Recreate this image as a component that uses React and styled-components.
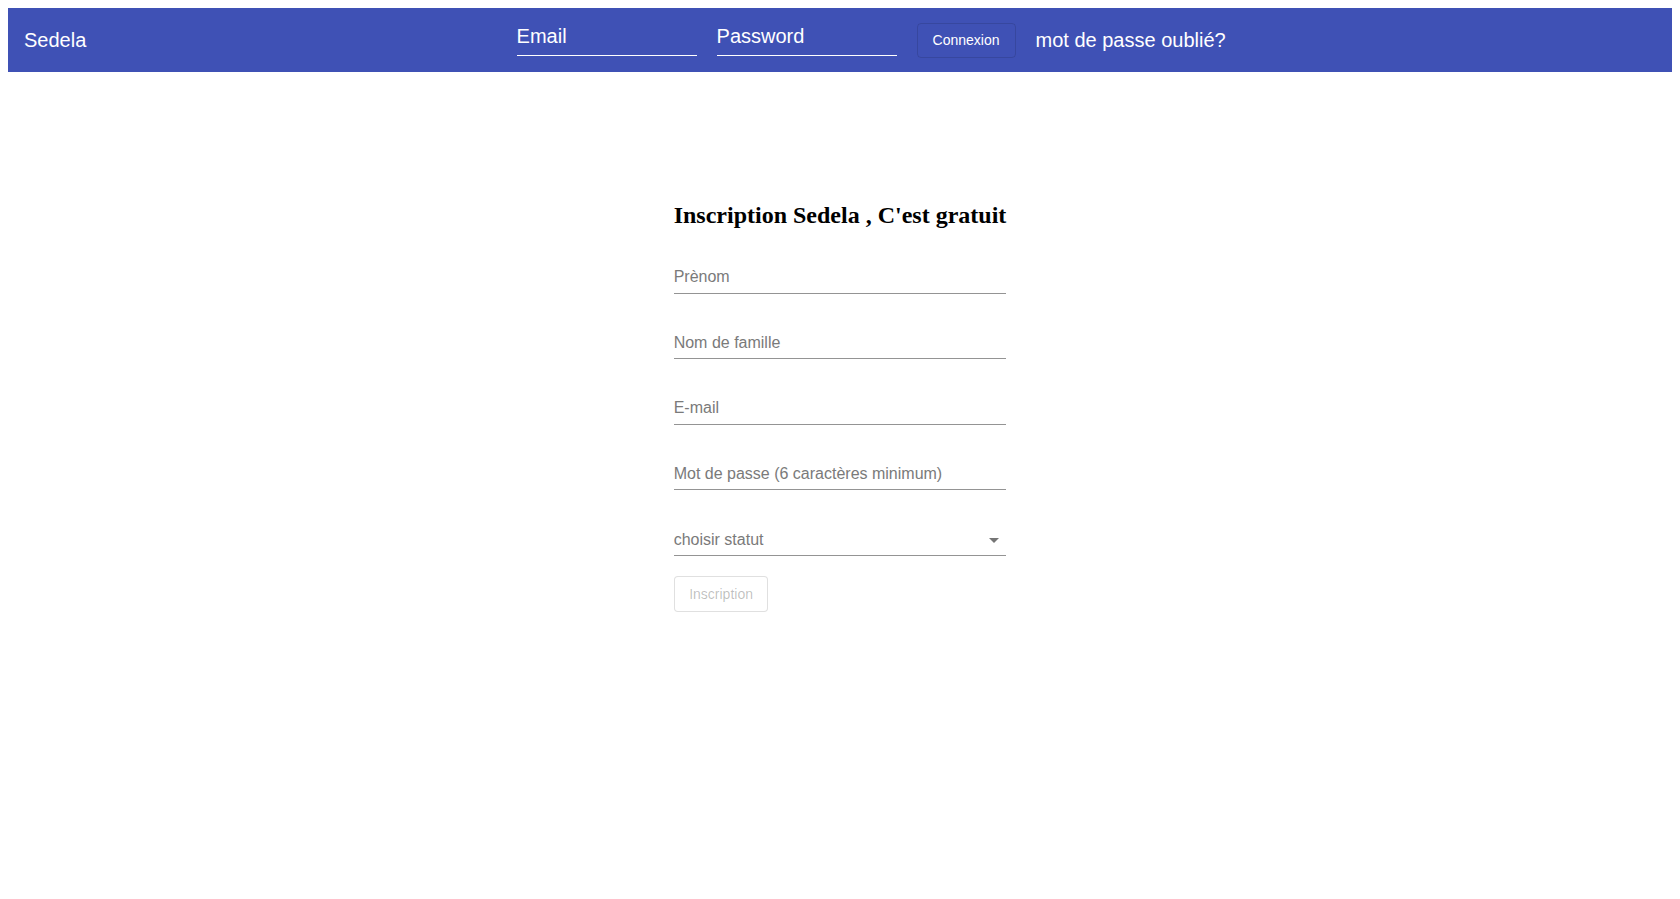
import React from "react";
import styled, { createGlobalStyle } from "styled-components";

const GlobalStyle = createGlobalStyle`
  body {
    margin: 8px;
    background: #ffffff;
    font-family: "Liberation Sans", Arial, sans-serif;
  }
`;

export default function App() {
  return (
    <>
      <GlobalStyle />
      <AppBar>
        <Brand>Sedela</Brand>
        <LoginForm>
          <HeaderField>Email</HeaderField>
          <HeaderField>Password</HeaderField>
          <ConnectButton>Connexion</ConnectButton>
          <ForgotLink>mot de passe oublié?</ForgotLink>
        </LoginForm>
      </AppBar>
      <Main>
        <SignupForm>
          <Title>Inscription Sedela , C'est gratuit</Title>
          <Field>
            <Input placeholder="Prènom" />
          </Field>
          <Field>
            <Input placeholder="Nom de famille" />
          </Field>
          <Field>
            <Input placeholder="E-mail" />
          </Field>
          <Field>
            <Input type="password" placeholder="Mot de passe (6 caractères minimum)" />
          </Field>
          <Field>
            <SelectValue>
              choisir statut
              <Arrow viewBox="0 0 24 24">
                <path d="M7 10l5 5 5-5z" />
              </Arrow>
            </SelectValue>
          </Field>
          <SubmitButton disabled>Inscription</SubmitButton>
        </SignupForm>
      </Main>
    </>
  );
}

const AppBar = styled.header`
  display: flex;
  align-items: center;
  height: 64px;
  padding: 0 16px;
  background-color: #3f51b5;
  color: #ffffff;
`;

const Brand = styled.div`
  font-size: 20px;
  line-height: 1.6;
`;

const LoginForm = styled.div`
  flex: 1;
  display: flex;
  justify-content: center;
  align-items: center;
  gap: 20px;
`;

const HeaderField = styled.div`
  width: 180px;
  margin-top: 2px;
  font-size: 20px;
  line-height: 20px;
  padding-bottom: 9px;
  border-bottom: 1px solid #ffffff;
`;

const ConnectButton = styled.button`
  height: 35px;
  padding: 0 15px;
  background: transparent;
  border: 1px solid rgba(0, 0, 0, 0.12);
  border-radius: 4px;
  color: #ffffff;
  font-family: "Liberation Sans", Arial, sans-serif;
  font-size: 14px;
  cursor: pointer;
`;

const ForgotLink = styled.span`
  font-size: 20px;
  line-height: 1.6;
`;

const Main = styled.main`
  display: flex;
  justify-content: center;
  padding-top: 130px;
`;

const SignupForm = styled.form`
  display: flex;
  flex-direction: column;
  align-items: flex-start;
  width: fit-content;
`;

const Title = styled.h2`
  margin: 0 0 16.5px;
  font-family: "Liberation Serif", "Times New Roman", serif;
  font-size: 24px;
  font-weight: bold;
  color: #000000;
`;

const Field = styled.div`
  position: relative;
  width: 100%;
  height: 48px;
  box-sizing: border-box;
  padding-top: 16px;
  margin-bottom: 17.6px;
  border-bottom: 1px solid rgba(0, 0, 0, 0.42);
  &:last-of-type {
    margin-bottom: 0;
  }
`;

const Input = styled.input`
  display: block;
  width: 100%;
  height: 19px;
  box-sizing: content-box;
  padding: 6px 0 7px;
  border: none;
  outline: none;
  background: transparent;
  font-family: "Liberation Sans", Arial, sans-serif;
  font-size: 16px;
  color: rgba(0, 0, 0, 0.87);
  &::placeholder {
    color: #7a7a7a;
    opacity: 1;
  }
`;

const SelectValue = styled.div`
  position: relative;
  height: 19px;
  padding: 6px 0 7px;
  font-size: 16px;
  line-height: 19px;
  color: #7a7a7a;
`;

const Arrow = styled.svg`
  position: absolute;
  right: 0;
  top: calc(50% - 12px);
  width: 24px;
  height: 24px;
  fill: rgba(0, 0, 0, 0.54);
`;

const SubmitButton = styled.button`
  margin-top: 20px;
  height: 36px;
  padding: 0 14.5px;
  background: #ffffff;
  border: 1px solid rgba(0, 0, 0, 0.12);
  border-radius: 4px;
  color: rgba(0, 0, 0, 0.26);
  font-family: "Liberation Sans", Arial, sans-serif;
  font-size: 14px;
  line-height: 1.75;
`;
